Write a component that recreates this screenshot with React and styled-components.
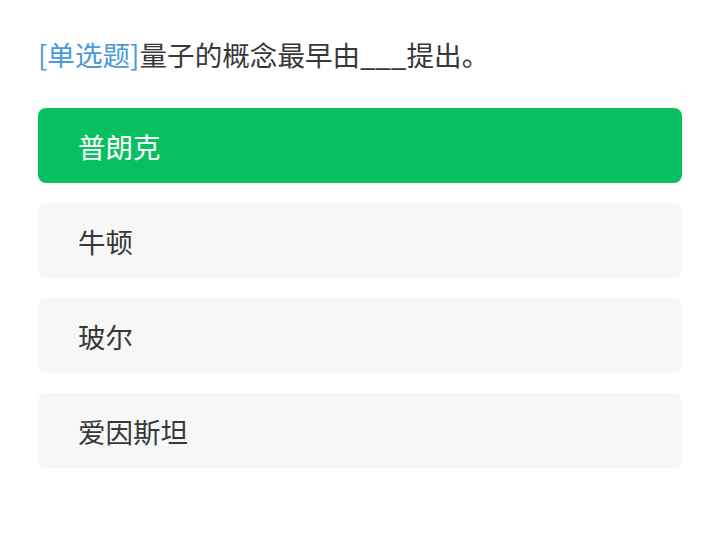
import React, { useState } from "react"
import styled, { createGlobalStyle } from "styled-components"

const GlobalStyle = createGlobalStyle`
  html, body {
    margin: 0;
    padding: 0;
    background: #ffffff;
  }
  body {
    font-family: "Noto Sans CJK SC", "Noto Sans", sans-serif;
  }
`

const Page = styled.div`
  width: 720px;
  height: 560px;
  box-sizing: border-box;
  padding: 34px 38px 0 38px;
  display: flex;
  flex-direction: column;
`

const Question = styled.div`
  font-size: 27.6px;
  line-height: 40px;
  color: #383838;
  margin-bottom: 34px;
`

const Tag = styled.span`
  color: #4a9ad8;
`

const OptionList = styled.div`
  display: flex;
  flex-direction: column;
  gap: 20px;
`

const Option = styled.div`
  height: 75px;
  box-sizing: border-box;
  padding: 0 40px;
  display: flex;
  align-items: center;
  border-radius: 8px;
  font-size: 27.5px;
  cursor: pointer;
  background: ${(p) => (p.$active ? "#07c160" : "#f7f7f7")};
  color: ${(p) => (p.$active ? "#ffffff" : "#383838")};
`

const options = ["普朗克", "牛顿", "玻尔", "爱因斯坦"]

export default function App() {
  const [selected, setSelected] = useState(0)

  return (
    <>
      <GlobalStyle />
      <Page>
        <Question>
          <Tag>[单选题]</Tag>量子的概念最早由___提出。
        </Question>
        <OptionList>
          {options.map((item, i) => (
            <Option key={item} $active={selected === i} onClick={() => setSelected(i)}>
              {item}
            </Option>
          ))}
        </OptionList>
      </Page>
    </>
  )
}
